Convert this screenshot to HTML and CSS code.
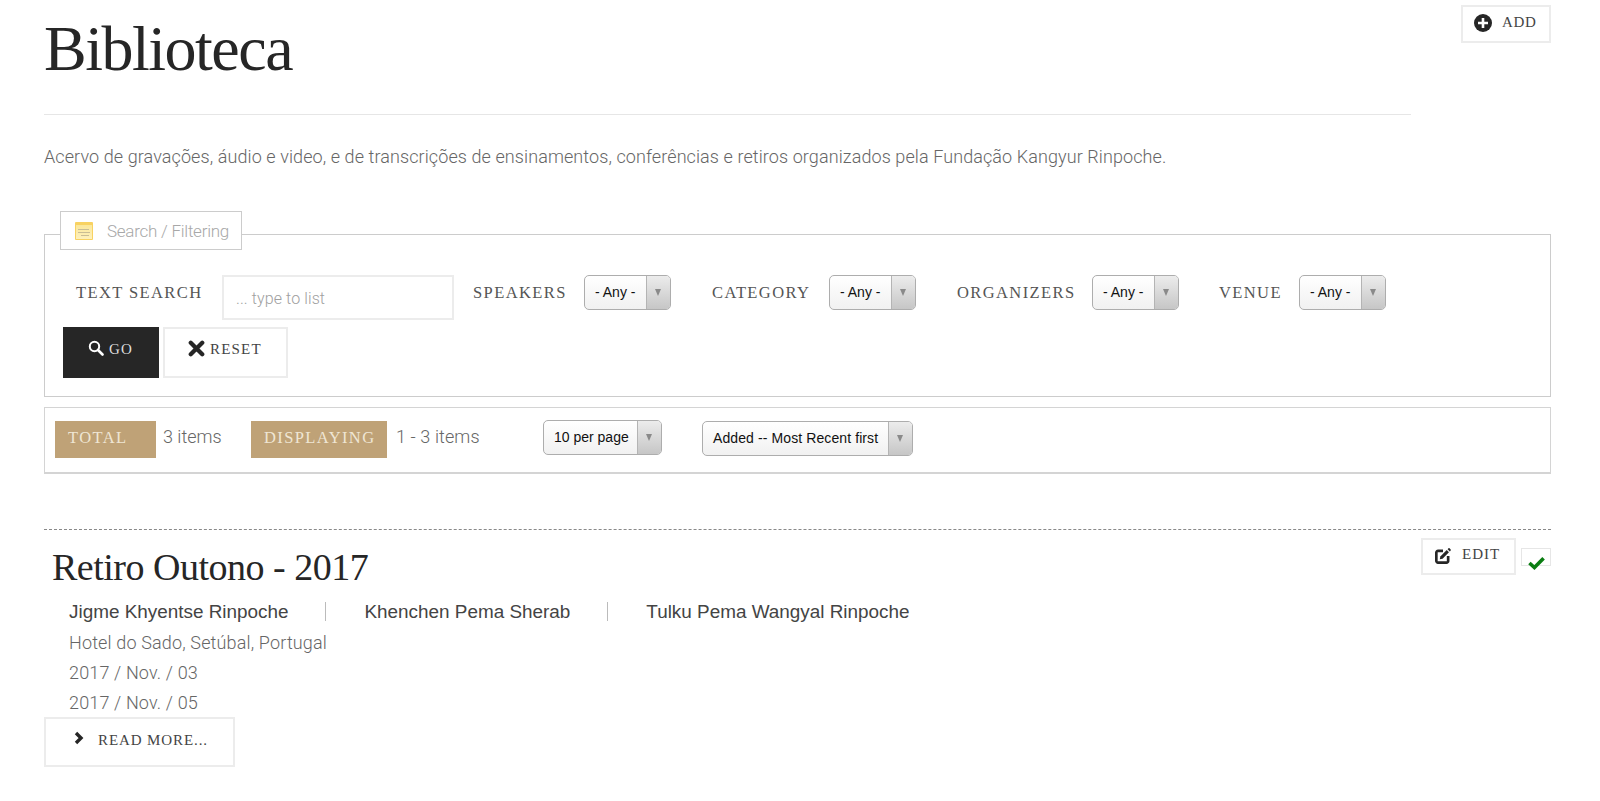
FILE: index.html
```html
<!DOCTYPE html>
<html lang="pt">
<head>
<meta charset="utf-8">
<title>Biblioteca</title>
<link rel="stylesheet" href="styles.css">
</head>
<body>
<header class="page-head">
  <div class="head-main">
    <h1 class="page-title">Biblioteca</h1>
  </div>
  <a class="btn btn-add" href="#">
    <svg class="icon-add" viewBox="0 0 18 18" aria-hidden="true"><circle cx="9" cy="9" r="9" fill="#262626"/><path d="M9 4v10M4 9h10" stroke="#fff" stroke-width="2.6"/></svg>
    <span>ADD</span>
  </a>
</header>
<p class="intro">Acervo de gravações, áudio e video, e de transcrições de ensinamentos, conferências e retiros organizados pela Fundação Kangyur Rinpoche.</p>

<section class="filter">
  <div class="legend">
    <svg class="icon-note" viewBox="0 0 18 18" aria-hidden="true"><defs><linearGradient id="ng" x1="0" y1="0" x2="0" y2="1"><stop offset="0" stop-color="#fbe79a"/><stop offset="1" stop-color="#fdf0bd"/></linearGradient></defs><rect width="18" height="18" rx="1" fill="#f8d262"/><rect x="1" y="3" width="16" height="14" fill="url(#ng)"/><path d="M3 7.500h11M3 10.500h12M6 13.500h8" stroke="#c9bd95" stroke-width="1" fill="none"/></svg>
    <span>Search / Filtering</span>
  </div>
  <div class="filter-row">
    <label class="flabel l-text">TEXT SEARCH</label>
    <div class="text-input">... type to list</div>
    <label class="flabel l-speakers">SPEAKERS</label>
    <div class="select s-any"><span class="select-text">- Any -</span><span class="select-arrow"></span></div>
    <label class="flabel l-category">CATEGORY</label>
    <div class="select s-any"><span class="select-text">- Any -</span><span class="select-arrow"></span></div>
    <label class="flabel l-organizers">ORGANIZERS</label>
    <div class="select s-any"><span class="select-text">- Any -</span><span class="select-arrow"></span></div>
    <label class="flabel l-venue">VENUE</label>
    <div class="select s-any"><span class="select-text">- Any -</span><span class="select-arrow"></span></div>
  </div>
  <div class="filter-actions">
    <a class="btn-go" href="#">
      <svg class="icon-search" viewBox="0 0 16 16" aria-hidden="true"><circle cx="6.500" cy="6.500" r="4.700" fill="none" stroke="#fff" stroke-width="2"/><path d="M10 10l4.500 4.500" stroke="#fff" stroke-width="2.600" stroke-linecap="round"/></svg>
      <span>GO</span>
    </a>
    <a class="btn-reset" href="#">
      <svg class="icon-x" viewBox="0 0 16 16" aria-hidden="true"><path d="M2.600 2.600l10.800 10.800M13.400 2.600L2.600 13.400" stroke="#262626" stroke-width="4" stroke-linecap="round"/></svg>
      <span>RESET</span>
    </a>
  </div>
</section>

<section class="summary">
  <span class="tag tag-total">TOTAL</span>
  <span class="count c-total">3 items</span>
  <span class="tag tag-display">DISPLAYING</span>
  <span class="count c-display">1 - 3 items</span>
  <div class="select s-page"><span class="select-text">10 per page</span><span class="select-arrow"></span></div>
  <div class="select s-sort"><span class="select-text">Added -- Most Recent first</span><span class="select-arrow"></span></div>
</section>

<article class="item">
  <div class="item-tools">
    <a class="btn btn-edit" href="#">
      <svg class="icon-edit" viewBox="0 0 18 18" aria-hidden="true"><path d="M9 3.200H3.600A2 2 0 0 0 1.500 5.300v9.100a2 2 0 0 0 2.100 2.100h9.100a2 2 0 0 0 2.100-2.100V9" fill="none" stroke="#262626" stroke-width="3"/><path d="M6 9.500L13.200 2.300l2.500 2.500-7.200 7.200-3.100.6z" fill="#262626"/><path d="M14.200 1.300l.9-.9a1 1 0 0 1 1.300 0l1.200 1.200a1 1 0 0 1 0 1.300l-.9.9z" fill="#262626"/></svg>
      <span>EDIT</span>
    </a>
    <span class="status">
      <svg class="icon-check" viewBox="0 0 18 14" aria-hidden="true"><path d="M1.500 7l5.300 4.800L16.500 2" fill="none" stroke="#0a7d12" stroke-width="3.800"/></svg>
    </span>
  </div>
  <h2 class="item-title">Retiro Outono - 2017</h2>
  <ul class="speakers">
    <li>Jigme Khyentse Rinpoche</li>
    <li>Khenchen Pema Sherab</li>
    <li>Tulku Pema Wangyal Rinpoche</li>
  </ul>
  <p class="meta">Hotel do Sado, Setúbal, Portugal</p>
  <p class="meta">2017 / Nov. / 03</p>
  <p class="meta">2017 / Nov. / 05</p>
  <a class="btn btn-more" href="#">
    <svg class="icon-chevron" viewBox="0 0 12 14" aria-hidden="true"><path d="M3 2l5 5-5 5" fill="none" stroke="#262626" stroke-width="3.400"/></svg>
    <span>READ MORE...</span>
  </a>
</article>
</body>
</html>
```
FILE: styles.css
```css
* { box-sizing: border-box; }
html, body { margin: 0; padding: 0; background: #fff; }
body {
  height: 801px;
  overflow: hidden;
  padding: 0 49px 0 44px;
  font-family: Roboto, "Liberation Sans", sans-serif;
  font-weight: 300;
  color: #555;
}
a { text-decoration: none; color: inherit; }

.page-head { display: flex; justify-content: space-between; align-items: flex-start; height: 115px; }
.head-main { width: 1367px; height: 115px; border-bottom: 1px solid #e6e6e6; }
.page-title {
  margin: 0;
  font-family: "Liberation Serif", serif;
  font-weight: 400;
  font-size: 64px;
  line-height: 98px;
  letter-spacing: -1.5px;
  color: #262626;
}
.btn {
  display: flex;
  background: #fff;
  border: 2px solid #ececec;
  font-family: "Liberation Serif", serif;
  font-weight: 400;
  font-size: 15px;
  color: #444;
  letter-spacing: 1px;
}
.btn-add {
  margin-top: 5px;
  width: 90px;
  height: 38px;
  padding: 7px 0 0 11px;
  letter-spacing: 0.7px;
  line-height: 17px;
}
.icon-add { width: 18px; height: 18px; margin-right: 10px; flex: none; }

.intro {
  margin: 30px 0 0;
  font-size: 18px;
  line-height: 24px;
  letter-spacing: 0.09px;
  color: #666;
}

.filter {
  margin-top: 65px;
  height: 163px;
  border: 1px solid #ccc;
  background: #fff;
}
.legend {
  display: flex;
  align-items: center;
  width: 182px;
  height: 39px;
  margin: -24px 0 0 15px;
  padding-left: 14px;
  background: #fff;
  border: 1px solid #ccc;
  font-size: 17px;
  letter-spacing: -0.25px;
  color: #a8a8a8;
}
.icon-note { width: 18px; height: 18px; margin-right: 14px; flex: none; }

.filter-row { display: flex; align-items: flex-start; margin-top: 25px; }
.flabel {
  font-family: "Liberation Serif", serif;
  font-weight: 400;
  font-size: 16.5px;
  line-height: 36px;
  letter-spacing: 1.4px;
  color: #555;
  white-space: nowrap;
}
.l-text { margin-left: 31px; width: 146px; }
.l-speakers { margin-left: 19px; width: 111px; }
.l-category { margin-left: 41px; width: 117px; }
.l-organizers { margin-left: 41px; width: 135px; }
.l-venue { margin-left: 40px; width: 80px; }
.text-input {
  width: 232px;
  height: 45px;
  padding-left: 12px;
  border: 2px solid #ececec;
  font-size: 16px;
  letter-spacing: 0.1px;
  line-height: 44px;
  color: #a0a0a0;
}
.select {
  display: flex;
  flex: none;
  height: 35px;
  border: 1px solid #adadad;
  border-radius: 5px;
  font-family: "Liberation Sans", sans-serif;
  font-weight: 400;
  font-size: 14px;
  line-height: 33px;
  color: #111;
  background: linear-gradient(#fff, #f1f1f1);
}
.select-text { flex: 1; padding-left: 10px; white-space: nowrap; }
.select-arrow {
  position: relative;
  width: 24px;
  flex: none;
  border-left: 1px solid #b4b4b4;
  background: linear-gradient(#ececec, #c6c6c6);
  border-radius: 0 4px 4px 0;
}
.select-arrow::after {
  content: "";
  position: absolute;
  left: 8px;
  top: 13px;
  border-left: 3.5px solid transparent;
  border-right: 3.5px solid transparent;
  border-top: 7px solid #8a8a8a;
}
.s-any { width: 87px; }

.filter-actions { display: flex; margin: 7px 0 0 18px; }
.btn-go, .btn-reset {
  display: flex;
  height: 51px;
  font-family: "Liberation Serif", serif;
  font-weight: 400;
  font-size: 15px;
  letter-spacing: 1.2px;
  line-height: 45px;
}
.btn-go { width: 96px; padding-left: 25px; background: #262626; color: #ddd; }
.btn-reset {
  width: 125px;
  margin-left: 4px;
  padding-left: 23px;
  border: 2px solid #ececec;
  color: #444;
  line-height: 41px;
}
.icon-search { width: 16px; height: 16px; margin: 13px 5px 0 0; flex: none; }
.icon-x { width: 17px; height: 17px; margin: 11px 5px 0 0; flex: none; }

.summary {
  display: flex;
  align-items: flex-start;
  margin-top: 10px;
  height: 67px;
  padding-top: 13px;
  border: 1px solid #d4d4d4;
  border-bottom-width: 2px;
}
.tag {
  height: 37px;
  padding-left: 13px;
  background: #bfa277;
  font-family: "Liberation Serif", serif;
  font-weight: 400;
  font-size: 16.5px;
  line-height: 34px;
  letter-spacing: 1.4px;
  color: #efe6d4;
}
.tag-total { width: 101px; margin-left: 10px; }
.tag-display { width: 136px; margin-left: 23px; }
.count { font-size: 18px; line-height: 31px; color: #666; white-space: nowrap; }
.c-total { width: 65px; margin-left: 7px; }
.c-display { width: 147px; margin-left: 9px; letter-spacing: 0.1px; }
.s-page { width: 119px; margin-top: -1px; }
.s-sort { width: 211px; margin-left: 40px; letter-spacing: 0.1px; }

.item { position: relative; margin-top: 55px; border-top: 1px dashed #888; }
.item-tools { position: absolute; right: 0; top: 8px; display: flex; align-items: flex-start; }
.btn-edit {
  width: 95px;
  height: 37px;
  padding: 6px 0 0 12px;
  line-height: 16px;
}
.icon-edit { width: 16px; height: 16px; margin: 2px 11px 0 0; flex: none; }
.status {
  position: relative;
  width: 30px;
  height: 18px;
  margin: 10px 0 0 5px;
  border: 1px solid #e6e6e6;
}
.icon-check { position: absolute; left: 6px; top: 7px; width: 17px; height: 14px; }
.item-title {
  margin: 0;
  padding: 14px 0 0 8px;
  font-family: "Liberation Serif", serif;
  font-weight: 400;
  font-size: 38px;
  line-height: 46px;
  letter-spacing: -0.5px;
  color: #262626;
}
.speakers { display: flex; margin: 7px 0 0 25px; padding: 0; list-style: none; height: 31px; }
.speakers li {
  font-family: "Liberation Sans", sans-serif;
  font-weight: 400;
  font-size: 18.9px;
  line-height: 30px;
  color: #444;
  white-space: nowrap;
}
.speakers li + li { position: relative; margin-left: 76px; }
.speakers li + li::before {
  content: "";
  position: absolute;
  left: -39px;
  top: 5px;
  width: 1px;
  height: 19px;
  background: #bbb;
}
.meta { margin: 0 0 0 25px; font-size: 18px; line-height: 30px; letter-spacing: 0.15px; color: #666; }
.btn-more {
  width: 191px;
  height: 50px;
  padding: 7px 0 0 27px;
  margin-top: -1px;
  letter-spacing: 0.9px;
  line-height: 28px;
}
.icon-chevron { width: 12px; height: 14px; margin: 5px 13px 0 0; flex: none; }
```
